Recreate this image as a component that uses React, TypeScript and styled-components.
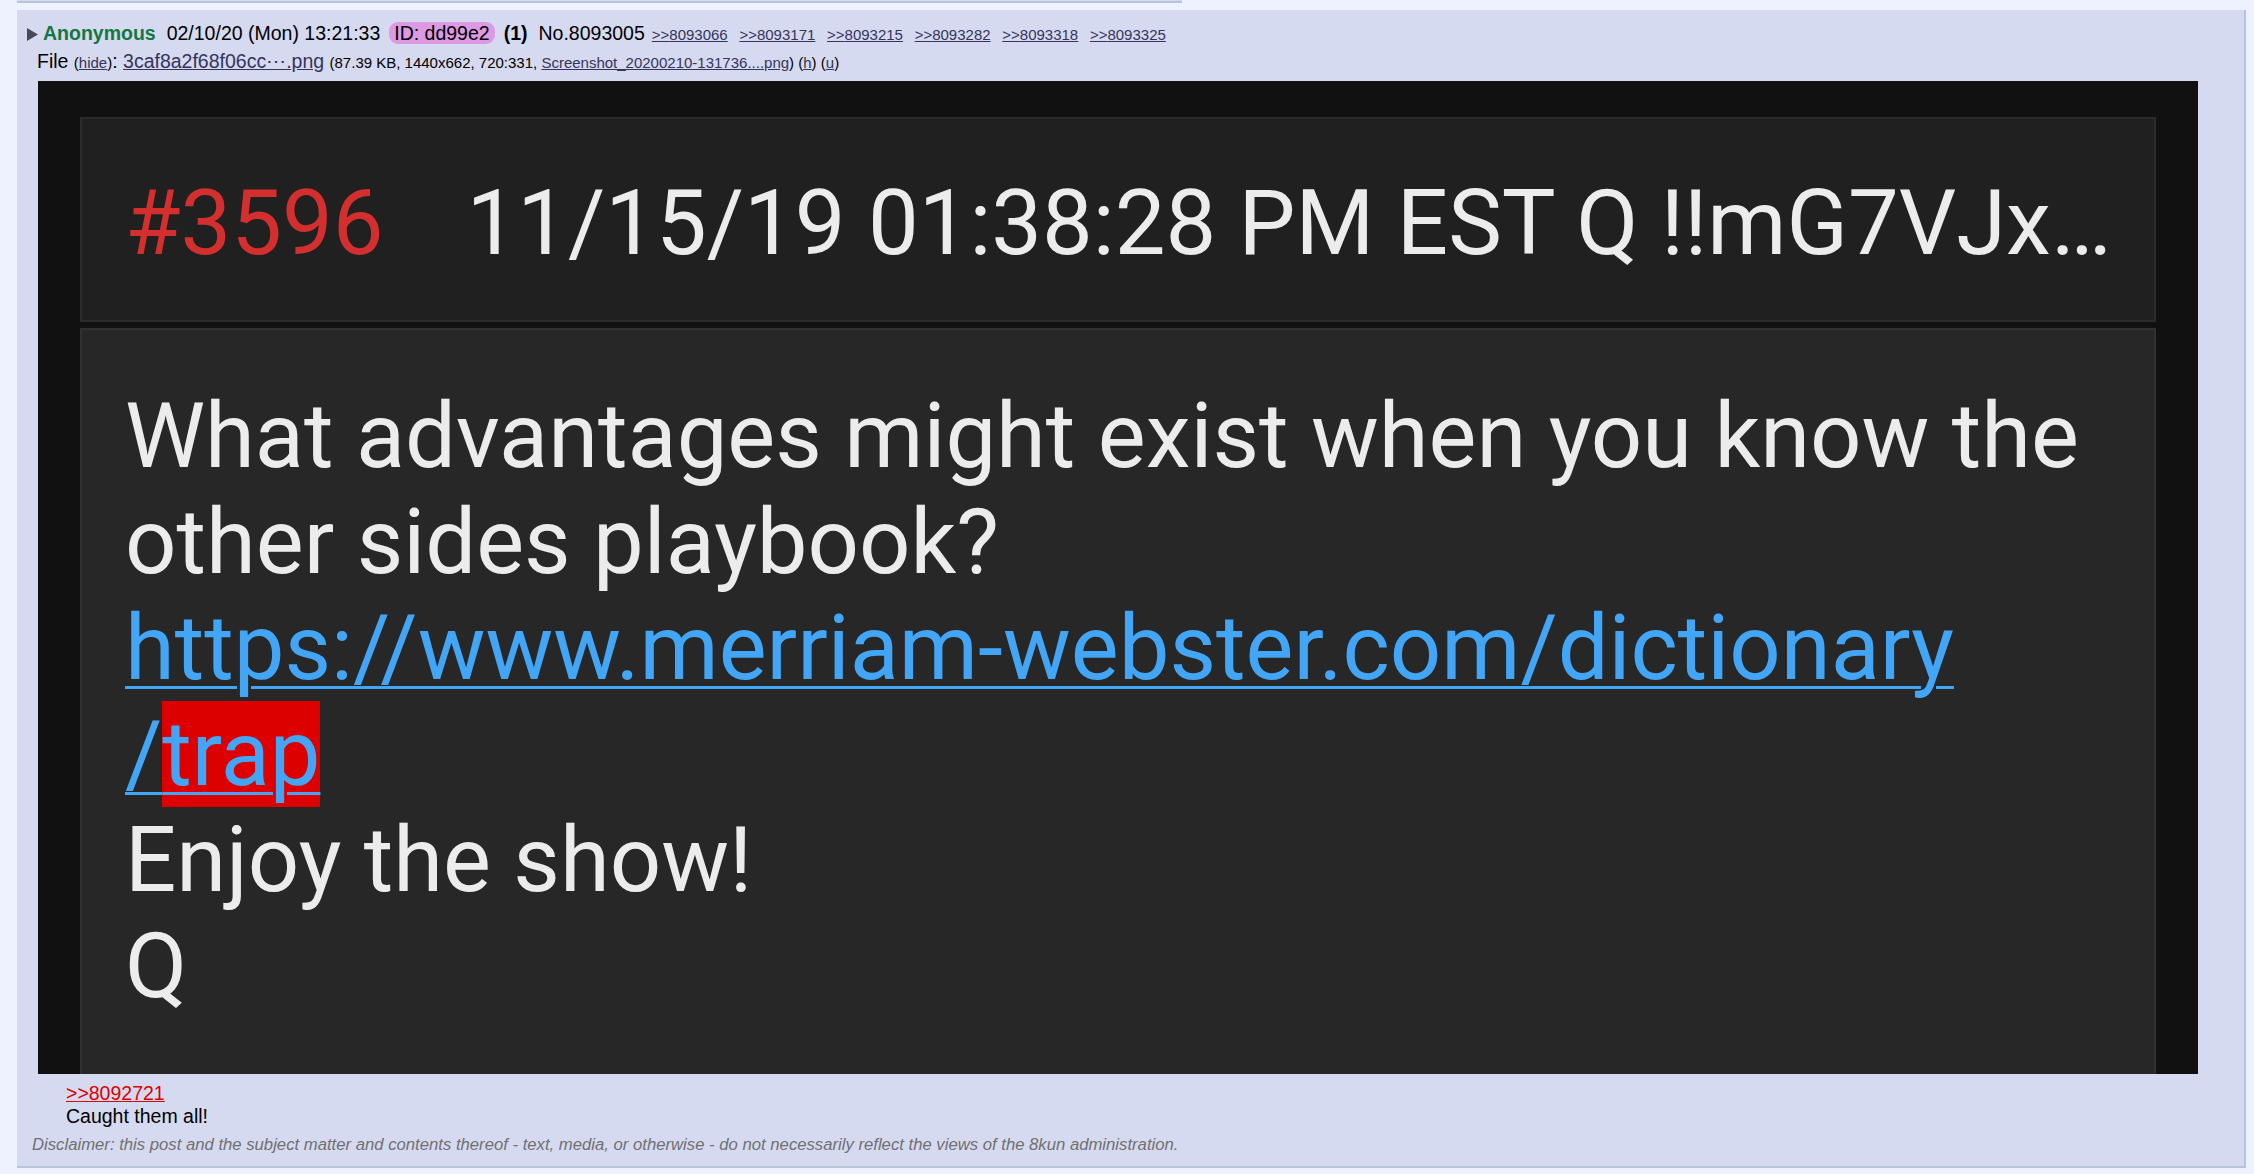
import React from "react";
import styled, { createGlobalStyle } from "styled-components";

const Global = createGlobalStyle`
  html, body { margin: 0; padding: 0; background: #eef2ff; }
  body { font-family: "Liberation Sans", Arial, sans-serif; color: #000; }
`;

const Page = styled.div`
  padding-left: 17px;
  background: #eef2ff;
  min-height: 1174px;
`;

const PrevPostEdge = styled.div`
  width: 1165px;
  height: 1px;
  background: #d6daf0;
  border-bottom: 2px solid #b7c5d9;
`;

const Post = styled.div`
  margin-top: 7px;
  width: 2227px;
  background: #d6daf0;
  border-right: 2px solid #b7c5d9;
  border-bottom: 2px solid #b7c5d9;
  padding: 12px 0 12px 0;
  box-sizing: content-box;
`;

const Intro = styled.div`
  display: flex;
  align-items: baseline;
  padding-left: 10px;
  font-size: 19.5px;
  line-height: 22.4px;
  white-space: nowrap;
`;

const Toggle = styled.span`
  display: inline-flex;
  align-self: center;
  margin-right: 5px;
  color: #4a4a55;
`;

const Name = styled.span`
  color: #117743;
  font-weight: bold;
  margin-right: 11px;
`;

const Plain = styled.span<{ $mr?: number }>`
  margin-right: ${(p) => p.$mr ?? 0}px;
`;

const IdPill = styled.span`
  background: #dd99e2;
  border-radius: 9px;
  padding: 0 5px;
  margin-right: 9px;
`;

const Count = styled.span`
  font-weight: bold;
  margin-right: 11px;
`;

const BackLink = styled.a`
  font-size: 15px;
  color: #34345c;
  text-decoration: underline;
  margin-left: 7px;
  & + & {
    margin-left: 11.7px;
  }
`;

const FileInfo = styled.div`
  margin-top: 3.6px;
  padding-left: 20px;
  font-size: 19.5px;
  line-height: 22.4px;
  white-space: nowrap;
`;

const Small = styled.span`
  font-size: 15px;
`;

const FileLink = styled.a<{ $small?: boolean }>`
  color: #34345c;
  text-decoration: underline;
  font-size: ${(p) => (p.$small ? "15px" : "inherit")};
`;

const ImageFrame = styled.div`
  margin: 7px 0 0 21px;
  width: 2160px;
  height: 993px;
  overflow: hidden;
  background: #111111;
  padding: 36px 42px 0 42px;
  box-sizing: border-box;
  display: flex;
  flex-direction: column;
  gap: 6px;
  font-family: Roboto, "Noto Sans", sans-serif;
  font-size: 90.3px;
  line-height: 106px;
  color: #ececec;
`;

const ShotHeader = styled.div`
  flex: 0 0 205px;
  display: flex;
  align-items: baseline;
  gap: 83px;
  box-sizing: border-box;
  background: #202020;
  border: 2px solid #2b2b2b;
  padding: 51px 0 0 43px;
  white-space: nowrap;
`;

const QNumber = styled.span`
  color: #d32f2f;
`;

const ShotBody = styled.div`
  flex: 0 0 760px;
  background: #272727;
  border: 2px solid #313131;
  padding: 53px 0 0 43px;
  box-sizing: border-box;
`;

const ShotLine = styled.div`
  white-space: nowrap;
`;

const ShotLink = styled.span`
  color: #42a5f5;
  text-decoration: underline;
  text-decoration-thickness: 3px;
  text-underline-offset: 7px;
`;

const Highlight = styled.span`
  background: #dd0000;
`;

const Body = styled.div`
  margin-top: 8px;
  padding-left: 49px;
  font-size: 19.5px;
  line-height: 22.4px;
`;

const QuoteLink = styled.a`
  display: block;
  color: #dd0000;
  text-decoration: underline;
`;

const Disclaimer = styled.div`
  margin-top: 9px;
  padding-left: 15px;
  font-size: 16.7px;
  line-height: 18px;
  font-style: italic;
  color: #707070;
  white-space: nowrap;
`;

const backlinks = ["8093066", "8093171", "8093215", "8093282", "8093318", "8093325"];

export default function App() {
  return (
    <>
      <Global />
      <Page>
        <PrevPostEdge />
        <Post>
          <Intro>
            <Toggle>
              <svg width="11" height="13" viewBox="0 0 11 13">
                <path d="M0 0 L11 6.5 L0 13 Z" fill="currentColor" />
              </svg>
            </Toggle>
            <Name>Anonymous</Name>
            <Plain $mr={9}>02/10/20 (Mon) 13:21:33</Plain>
            <IdPill>ID: dd99e2</IdPill>
            <Count>(1)</Count>
            <Plain>No.8093005</Plain>
            {backlinks.map((b) => (
              <BackLink key={b}>&gt;&gt;{b}</BackLink>
            ))}
          </Intro>
          <FileInfo>
            File <Small>(<FileLink>hide</FileLink>)</Small>: <FileLink>3caf8a2f68f06cc⋯.png</FileLink>{" "}
            <Small>
              (87.39 KB, 1440x662, 720:331, <FileLink $small>Screenshot_20200210-131736....png</FileLink>) (
              <FileLink $small>h</FileLink>) (<FileLink $small>u</FileLink>)
            </Small>
          </FileInfo>
          <ImageFrame>
            <ShotHeader>
              <QNumber>#3596</QNumber>
              <span>11/15/19 01:38:28 PM EST Q !!mG7VJx…</span>
            </ShotHeader>
            <ShotBody>
              <ShotLine>What advantages might exist when you know the</ShotLine>
              <ShotLine>other sides playbook?</ShotLine>
              <ShotLine>
                <ShotLink>https://www.merriam-webster.com/dictionary</ShotLink>
              </ShotLine>
              <ShotLine>
                <ShotLink>
                  /<Highlight>trap</Highlight>
                </ShotLink>
              </ShotLine>
              <ShotLine>Enjoy the show!</ShotLine>
              <ShotLine>Q</ShotLine>
            </ShotBody>
          </ImageFrame>
          <Body>
            <QuoteLink>&gt;&gt;8092721</QuoteLink>
            Caught them all!
          </Body>
          <Disclaimer>
            Disclaimer: this post and the subject matter and contents thereof - text, media, or otherwise - do not
            necessarily reflect the views of the 8kun administration.
          </Disclaimer>
        </Post>
      </Page>
    </>
  );
}
